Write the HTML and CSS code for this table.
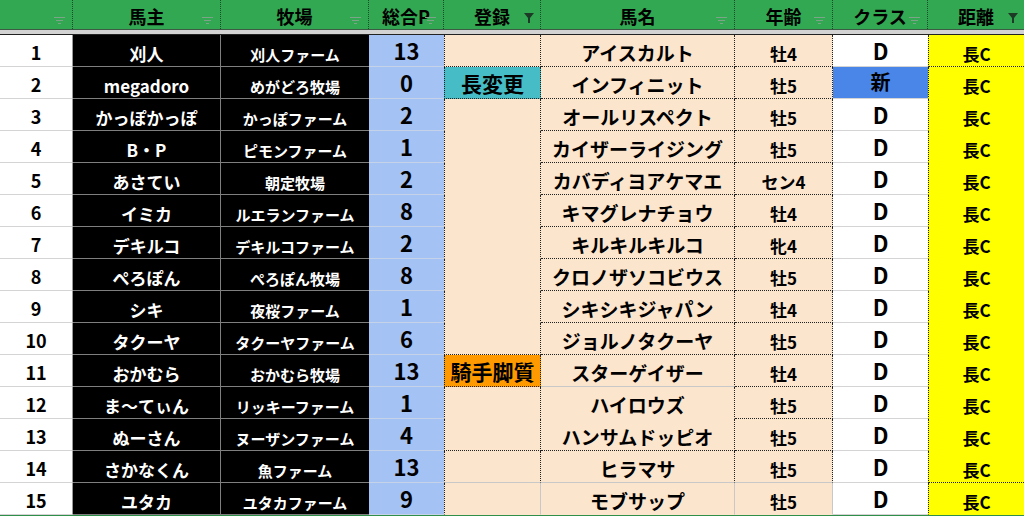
FILE: index.html
```html
<!DOCTYPE html>
<html lang="ja">
<head>
<meta charset="utf-8">
<title>登録一覧</title>
<link rel="stylesheet" href="styles.css">
</head>
<body>
<div class="sheet">
  <div class="h">
    <span></span>
    <svg class="flt" viewBox="0 0 11 7" width="11" height="7"><path d="M0 0.5H11M2 3.5H9M4 6.5H7"/></svg>
  </div>
  <div class="h"><span>馬主</span><svg class="flt" viewBox="0 0 11 7" width="11" height="7"><path d="M0 0.5H11M2 3.5H9M4 6.5H7"/></svg></div>
  <div class="h"><span>牧場</span><svg class="flt" viewBox="0 0 11 7" width="11" height="7"><path d="M0 0.5H11M2 3.5H9M4 6.5H7"/></svg></div>
  <div class="h"><span>総合P</span><svg class="flt" viewBox="0 0 11 7" width="11" height="7"><path d="M0 0.5H11M2 3.5H9M4 6.5H7"/></svg></div>
  <div class="h"><span>登録</span><svg class="flt on" viewBox="0 0 10 10" width="10" height="10"><path d="M0 0H10L6 5V10H4V5Z"/></svg></div>
  <div class="h"><span>馬名</span><svg class="flt" viewBox="0 0 11 7" width="11" height="7"><path d="M0 0.5H11M2 3.5H9M4 6.5H7"/></svg></div>
  <div class="h"><span>年齢</span><svg class="flt" viewBox="0 0 11 7" width="11" height="7"><path d="M0 0.5H11M2 3.5H9M4 6.5H7"/></svg></div>
  <div class="h"><span>クラス</span><svg class="flt" viewBox="0 0 11 7" width="11" height="7"><path d="M0 0.5H11M2 3.5H9M4 6.5H7"/></svg></div>
  <div class="h last"><span>距離</span><svg class="flt on" viewBox="0 0 10 10" width="10" height="10"><path d="M0 0H10L6 5V10H4V5Z"/></svg></div>
  <div class="band"></div>

  <div class="c num">1</div><div class="c own">刈人</div><div class="c farm">刈人ファーム</div><div class="c pt">13</div><div class="c reg dd">&nbsp;</div><div class="c horse dd">アイスカルト</div><div class="c age dd">牡4</div><div class="c cls">D</div><div class="c dist dd">長C</div>
  <div class="c num">2</div><div class="c own">megadoro</div><div class="c farm">めがどろ牧場</div><div class="c pt">0</div><div class="c reg teal dd">長変更</div><div class="c horse dd">インフィニット</div><div class="c age dd">牡5</div><div class="c cls new">新</div><div class="c dist">長C</div>
  <div class="c num">3</div><div class="c own">かっぽかっぽ</div><div class="c farm">かっぽファーム</div><div class="c pt">2</div><div class="c reg">&nbsp;</div><div class="c horse dd">オールリスペクト</div><div class="c age dd">牡5</div><div class="c cls">D</div><div class="c dist">長C</div>
  <div class="c num">4</div><div class="c own">B・P</div><div class="c farm">ピモンファーム</div><div class="c pt">1</div><div class="c reg">&nbsp;</div><div class="c horse dd">カイザーライジング</div><div class="c age dd">牡5</div><div class="c cls">D</div><div class="c dist">長C</div>
  <div class="c num">5</div><div class="c own">あさてい</div><div class="c farm">朝定牧場</div><div class="c pt">2</div><div class="c reg">&nbsp;</div><div class="c horse dd">カバディヨアケマエ</div><div class="c age dd">セン4</div><div class="c cls">D</div><div class="c dist">長C</div>
  <div class="c num">6</div><div class="c own">イミカ</div><div class="c farm">ルエランファーム</div><div class="c pt">8</div><div class="c reg">&nbsp;</div><div class="c horse dd">キマグレナチョウ</div><div class="c age dd">牡4</div><div class="c cls">D</div><div class="c dist">長C</div>
  <div class="c num">7</div><div class="c own">デキルコ</div><div class="c farm">デキルコファーム</div><div class="c pt">2</div><div class="c reg">&nbsp;</div><div class="c horse dd">キルキルキルコ</div><div class="c age dd">牝4</div><div class="c cls">D</div><div class="c dist">長C</div>
  <div class="c num">8</div><div class="c own">ぺろぽん</div><div class="c farm">ぺろぽん牧場</div><div class="c pt">8</div><div class="c reg">&nbsp;</div><div class="c horse dd">クロノザソコビウス</div><div class="c age dd">牡5</div><div class="c cls">D</div><div class="c dist">長C</div>
  <div class="c num">9</div><div class="c own">シキ</div><div class="c farm">夜桜ファーム</div><div class="c pt">1</div><div class="c reg">&nbsp;</div><div class="c horse dd">シキシキジャパン</div><div class="c age dd">牡4</div><div class="c cls">D</div><div class="c dist">長C</div>
  <div class="c num">10</div><div class="c own">タクーヤ</div><div class="c farm">タクーヤファーム</div><div class="c pt">6</div><div class="c reg dd">&nbsp;</div><div class="c horse dd">ジョルノタクーヤ</div><div class="c age dd">牡5</div><div class="c cls">D</div><div class="c dist">長C</div>
  <div class="c num">11</div><div class="c own">おかむら</div><div class="c farm">おかむら牧場</div><div class="c pt">13</div><div class="c reg orange dd">騎手脚質</div><div class="c horse sl">スターゲイザー</div><div class="c age dd">牡4</div><div class="c cls">D</div><div class="c dist">長C</div>
  <div class="c num">12</div><div class="c own">ま～てぃん</div><div class="c farm">リッキーファーム</div><div class="c pt">1</div><div class="c reg">&nbsp;</div><div class="c horse">ハイロウズ</div><div class="c age dd">牡5</div><div class="c cls">D</div><div class="c dist">長C</div>
  <div class="c num">13</div><div class="c own">ぬーさん</div><div class="c farm">ヌーザンファーム</div><div class="c pt">4</div><div class="c reg dd">&nbsp;</div><div class="c horse dd">ハンサムドッピオ</div><div class="c age dd">牡5</div><div class="c cls">D</div><div class="c dist">長C</div>
  <div class="c num">14</div><div class="c own">さかなくん</div><div class="c farm">魚ファーム</div><div class="c pt">13</div><div class="c reg sl">&nbsp;</div><div class="c horse sl">ヒラマサ</div><div class="c age sl">牡5</div><div class="c cls">D</div><div class="c dist dd">長C</div>
  <div class="c num">15</div><div class="c own">ユタカ</div><div class="c farm">ユタカファーム</div><div class="c pt">9</div><div class="c reg nr">&nbsp;</div><div class="c horse nr">モブサップ</div><div class="c age nr">牡5</div><div class="c cls">D</div><div class="c dist">長C</div>
</div>
</body>
</html>
```

FILE: styles.css
```css
html, body {
  margin: 0;
  padding: 0;
  background: #ffffff;
  overflow: hidden;
}

.sheet {
  display: grid;
  grid-template-columns: 73px 148px 148px 75px 97px 194px 98px 95px 96px;
  grid-template-rows: 29px 6px repeat(15, 32px);
  width: 1024px;
  height: 516px;
  border-bottom: 1px solid #2f8f4a;
  box-sizing: border-box;
  font-family: "Noto Sans CJK JP", "Noto Sans", sans-serif;
  font-weight: 700;
  color: #000;
}

/* header */
.h {
  position: relative;
  background: #33a853;
  display: flex;
  align-items: center;
  justify-content: center;
  font-size: 18px;
  line-height: 1;
  padding-top: 3px;
  box-sizing: border-box;
  border-right: 1px dotted #1f4a2c;
}
.h.last { border-right: none; }

.flt {
  position: absolute;
  right: 7px;
  top: 17px;
  fill: none;
  stroke: #7da488;
  stroke-width: 1.2;
}
.flt.on {
  top: 13px;
  right: 6px;
  fill: #1c3a25;
  stroke: none;
}

.band {
  grid-column: 1 / -1;
  background: #d3d3d3;
  border-top: 1px solid #3d5a45;
  border-bottom: 1px solid #222;
}

/* body cells */
.c {
  display: flex;
  align-items: center;
  justify-content: center;
  box-sizing: border-box;
  line-height: 1;
  white-space: nowrap;
  overflow: hidden;
  border-bottom: 1px solid #d4d4d4;
}

.num {
  font-size: 18px;
  padding-top: 3px;
  border-right: 1px solid #9a9a9a;
}
.own {
  background: #000;
  color: #fff;
  font-size: 17px;
  padding-top: 5px;
  border-bottom-color: #7f7f7f;
  border-right: 1px solid #7f7f7f;
}
.farm {
  background: #000;
  color: #fff;
  font-size: 15px;
  padding-top: 7px;
  border-bottom-color: #7f7f7f;
}
.pt {
  background: #a4c2f4;
  font-size: 22px;
  padding-bottom: 1px;
  border-bottom-color: #c6d2e8;
}
.reg {
  background: #fce5cd;
  font-size: 21px;
  padding-top: 1px;
  border-left: 1px dotted #222;
  border-right: 1px dotted #222;
  border-bottom-color: transparent;
}
.reg.teal { background: #46bdc6; }
.reg.orange { background: #ff9900; }
.horse {
  background: #fce5cd;
  font-size: 19px;
  padding-top: 3px;
  border-right: 1px dotted #222;
  border-bottom-color: transparent;
}
.age {
  background: #fce5cd;
  font-size: 17px;
  padding-top: 5px;
  border-right: 1px dotted #222;
  border-bottom-color: transparent;
}
.cls {
  background: #fff;
  font-size: 22px;
  padding-bottom: 2px;
}
.cls.new {
  background: #4a86e8;
  font-size: 20px;
}
.dist {
  background: #ffff00;
  font-size: 17px;
  padding-top: 5px;
  border-left: 1px dotted #222;
  border-bottom-color: transparent;
}

.c.dd { border-bottom: 1px dotted #222; }
.c.sl { border-bottom: 1px solid #c8c8c8; }
.c.nr { border-right: 1px solid #c8c8c8; }
```
